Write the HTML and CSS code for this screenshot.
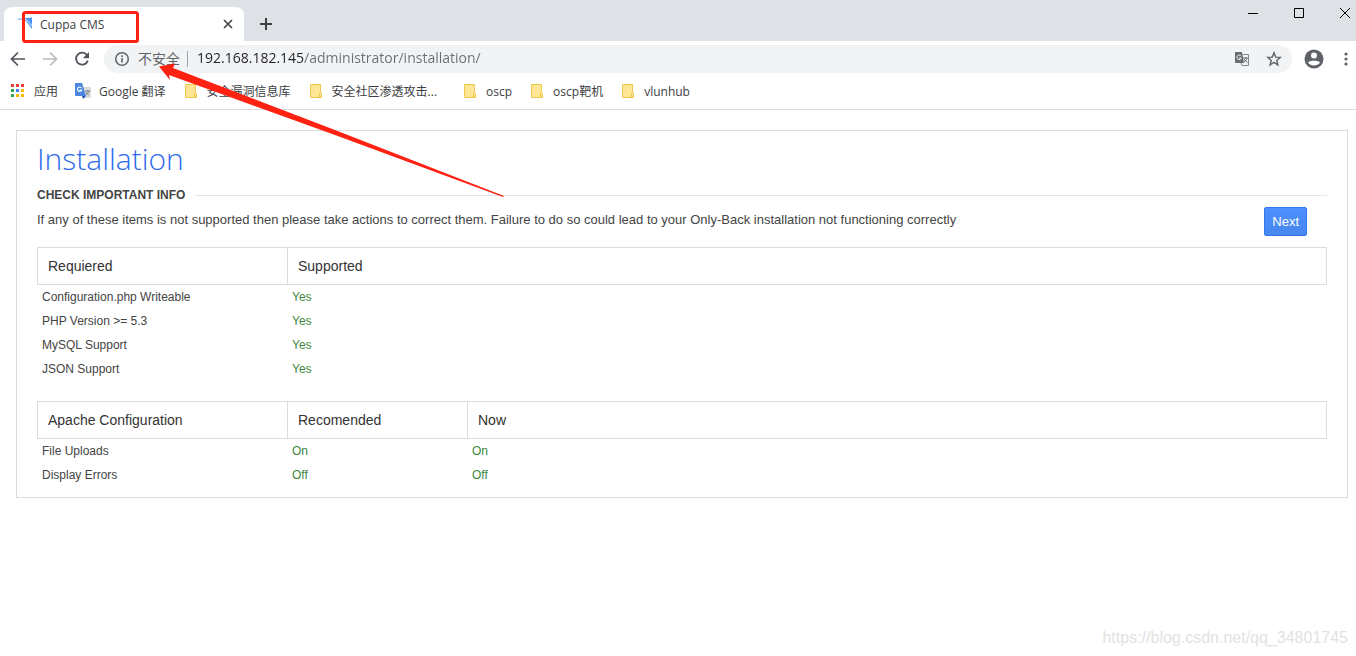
FILE: index.html
```html
<!DOCTYPE html>
<html lang="zh-CN">
<head>
<meta charset="utf-8">
<title>Cuppa CMS</title>
<link rel="stylesheet" href="styles.css">
</head>
<body>
<header class="browser">
  <div class="tabstrip">
    <div class="tab">
      <svg class="favicon" width="16" height="16" viewBox="0 0 16 16"><path d="M0 3 16 1.500V13L10 5z" fill="#4c93f5"/><path d="M4 3.500C8 4 11 7 13.500 13M8 2.500C11 4 13 6 16 10" fill="none" stroke="#fff" stroke-width=".9"/></svg>
      <span class="tab-title">Cuppa CMS</span>
      <button class="icon-btn tab-close" aria-label="Close tab"><svg width="16" height="16" viewBox="0 0 16 16"><path d="m4 4 8 8M12 4l-8 8" stroke="#3c4043" stroke-width="1.6"/></svg></button>
    </div>
    <button class="icon-btn new-tab" aria-label="New tab"><svg width="16" height="16" viewBox="0 0 16 16"><path d="M8 2v12M2 8h12" stroke="#3c4043" stroke-width="2"/></svg></button>
    <div class="window-controls">
      <button class="icon-btn" aria-label="Minimize"><svg width="12" height="12" viewBox="0 0 12 12"><path d="M1 6.5h10" stroke="#000"/></svg></button>
      <button class="icon-btn" aria-label="Maximize"><svg width="12" height="12" viewBox="0 0 12 12"><path d="M1.500 1.500h9v9h-9z" fill="none" stroke="#000"/></svg></button>
      <button class="icon-btn" aria-label="Close"><svg width="12" height="12" viewBox="0 0 12 12"><path d="m1 1 10 10M11 1 1 11" stroke="#000"/></svg></button>
    </div>
  </div>
  <div class="toolbar">
    <button class="icon-btn" aria-label="Back"><svg width="16" height="16" viewBox="0 0 16 16"><path d="M15 8H2M8 1.500 1.500 8 8 14.500" fill="none" stroke="#50545a" stroke-width="1.700"/></svg></button>
    <button class="icon-btn" aria-label="Forward"><svg width="16" height="16" viewBox="0 0 16 16"><path d="M1 8h13M8 1.500 14.500 8 8 14.500" fill="none" stroke="#b9bbbe" stroke-width="1.700"/></svg></button>
    <button class="icon-btn" aria-label="Reload"><svg width="16" height="16" viewBox="0 0 16 16"><path d="M13 4.200A6 6 0 1 0 13.800 9.600" fill="none" stroke="#50545a" stroke-width="1.800"/><path d="M15 1v6.200H8.800z" fill="#50545a"/></svg></button>
    <div class="omnibox">
      <svg width="16" height="16" viewBox="0 0 16 16"><circle cx="8" cy="8" r="6.300" fill="none" stroke="#5f6368" stroke-width="1.500"/><path d="M8 7v4.500M8 4.300v1.700" stroke="#5f6368" stroke-width="1.600"/></svg>
      <label class="security" for="url">不安全</label>
      <span class="divider"></span>
      <input id="url" class="url" type="text" value="192.168.182.145/administrator/installation/">
      <button class="icon-btn" aria-label="Translate this page"><svg width="16" height="16" viewBox="0 0 16 16"><path d="M1 1h7l2 11H2a1 1 0 0 1-1-1z" fill="#6a6d71"/><path d="M9 3.500h5.500v11H8L7 12" fill="none" stroke="#85878a"/><path d="M7 5.200A2.200 2.200 0 1 0 7.200 7H5" fill="none" stroke="#fff"/><path d="M9 7h5M11.500 6v1M13 7c-.5 2-2 3.500-3.500 4.500M10 8c.7 1.500 2 2.700 3.500 3.500" fill="none" stroke="#6a6d71"/></svg></button>
      <button class="icon-btn star" aria-label="Bookmark this page"><svg width="16" height="16" viewBox="0 0 16 16"><path d="m8 1.800 1.700 4.300 4.600.3-3.500 3 1.100 4.500L8 11.400l-3.900 2.500 1.100-4.500-3.500-3 4.600-.3z" fill="none" stroke="#5f6368" stroke-width="1.400"/></svg></button>
    </div>
    <button class="icon-btn profile" aria-label="Profile"><svg width="20" height="20" viewBox="0 0 20 20"><circle cx="10" cy="10" r="9.500" fill="#5f6368"/><circle cx="10" cy="6.500" r="3" fill="#fff"/><path d="M4 13.500C5.500 11 14.500 11 16 13.500 13.500 17.500 6.500 17.500 4 13.500z" fill="#fff"/></svg></button>
    <button class="icon-btn menu" aria-label="Menu"><svg width="4" height="16" viewBox="0 0 4 16"><g fill="#5f6368"><circle cx="2" cy="3" r="1.600"/><circle cx="2" cy="8" r="1.600"/><circle cx="2" cy="13" r="1.600"/></g></svg></button>
  </div>
  <nav class="bookmarks">
    <a href="#" class="bookmark"><svg width="16" height="16" viewBox="0 0 16 16"><path d="M1 1h3v3H1zM6 1h3v3H6zM11 1h3v3h-3z" fill="#ea4335"/><path d="M1 6h3v3H1z" fill="#34a853"/><path d="M6 6h3v3H6z" fill="#4285f4"/><path d="M11 6h3v3h-3zM6 11h3v3H6zM11 11h3v3h-3z" fill="#fbbc05"/><path d="M1 11h3v3H1z" fill="#34a853"/></svg>应用</a>
    <a href="#" class="bookmark"><svg width="16" height="16" viewBox="0 0 16 16"><path d="M7 4h9v11H8z" fill="#dcdcdc"/><path d="M0 0h7l4 13H1a1 1 0 0 1-1-1z" fill="#4a86e0"/><path d="M7 13h4l-3 3z" fill="#2855ad"/><path d="M6.500 5A2.200 2.200 0 1 0 6.700 7H4.500" fill="none" stroke="#fff" stroke-width="1.100"/><path d="M10 8h5M12.500 7v1M14 8c-.5 2-2 3-3 4M11 9c.7 1.500 2 2.500 3 3" fill="none" stroke="#747c85"/></svg>Google 翻译</a>
    <a href="#" class="bookmark"><svg width="16" height="16"><use href="#folder"/></svg>安全漏洞信息库</a>
    <a href="#" class="bookmark wide"><svg width="16" height="16"><use href="#folder"/></svg>安全社区渗透攻击...</a>
    <a href="#" class="bookmark"><svg width="16" height="16"><use href="#folder"/></svg>oscp</a>
    <a href="#" class="bookmark"><svg width="16" height="16"><use href="#folder"/></svg>oscp靶机</a>
    <a href="#" class="bookmark"><svg width="16" height="16"><use href="#folder"/></svg>vlunhub</a>
  </nav>
</header>
<main class="panel">
  <h1 class="title">Installation</h1>
  <h2 class="section">Check important info</h2>
  <div class="intro">
    <p class="intro-text">If any of these items is not supported then please take actions to correct them. Failure to do so could lead to your Only-Back installation not functioning correctly</p>
    <button class="next">Next</button>
  </div>
  <table class="checks">
    <thead><tr><th class="col-name">Requiered</th><th>Supported</th></tr></thead>
    <tbody>
      <tr><td>Configuration.php Writeable</td><td class="ok">Yes</td></tr>
      <tr><td>PHP Version &gt;= 5.3</td><td class="ok">Yes</td></tr>
      <tr><td>MySQL Support</td><td class="ok">Yes</td></tr>
      <tr><td>JSON Support</td><td class="ok">Yes</td></tr>
    </tbody>
  </table>
  <table class="checks">
    <thead><tr><th class="col-name">Apache Configuration</th><th class="col-value">Recomended</th><th>Now</th></tr></thead>
    <tbody>
      <tr><td>File Uploads</td><td class="ok">On</td><td class="ok">On</td></tr>
      <tr><td>Display Errors</td><td class="ok">Off</td><td class="ok">Off</td></tr>
    </tbody>
  </table>
</main>
<footer class="watermark">https://blog.csdn.net/qq_34801745</footer>
<svg class="annotation" width="520" height="210" viewBox="0 0 520 210">
  <rect x="23.500" y="12.500" width="114" height="29" rx="2" fill="none" stroke="#ff2112" stroke-width="3"/>
  <path d="M159 66.500 175 63.500 173 68 335 130 504 196 503 197 335 135 169 75 170 80z" fill="#ff2112"/>
</svg>
<svg class="defs" width="0" height="0"><symbol id="folder" viewBox="0 0 16 16"><path d="M2.500 1.500h10v8l1 1v4h-11z" fill="#ffe694" stroke="#ecc94e"/><path d="M11.500 14v-3.500l1-1 1 1V14z" fill="#ffe694" stroke="#ecc94e"/></symbol></svg>
</body>
</html>
```
FILE: styles.css
```css
* { box-sizing: border-box; }
body {
  margin: 0;
  min-height: 100vh;
  display: flex;
  flex-direction: column;
  background: #fff;
  color: #444;
  font-family: "Liberation Sans", Arial, sans-serif;
  font-size: 12px;
}
.browser { font-family: "Open Sans", "Noto Sans CJK SC", sans-serif; color: #3c4043; }
.icon-btn {
  display: flex;
  align-items: center;
  justify-content: center;
  padding: 0;
  border: 0;
  background: none;
}
svg { flex: none; }
.tabstrip { display: flex; height: 41px; padding-left: 4px; background: #dee1e6; }
.tab {
  display: flex;
  align-items: center;
  width: 240px;
  margin-top: 7px;
  padding: 0 8px 0 12px;
  gap: 8px;
  border-radius: 8px 8px 0 0;
  background: #fff;
}
.tab-title { flex: 1; }
.new-tab { margin: 7px 0 0 14px; height: 34px; }
.window-controls { display: flex; gap: 34px; margin-left: auto; padding-right: 5px; height: 26px; }
.toolbar { display: flex; align-items: center; gap: 16px; height: 36px; padding: 0 8px 0 10px; }
.omnibox {
  flex: 1;
  display: flex;
  align-items: center;
  gap: 8px;
  height: 28px;
  margin-left: -2px;
  padding: 0 10px;
  border-radius: 14px;
  background: #f1f3f4;
  font-size: 14px;
  line-height: 20px;
}
.security { color: #5f6368; }
.divider { width: 1px; height: 16px; margin-left: -1px; background: #a0a3a6; }
.url {
  flex: 1;
  min-width: 0;
  padding: 0 0 2px 1px;
  border: 0;
  background: linear-gradient(90deg, #202124 108px, #6a6e73 108px);
  background-clip: text;
  -webkit-background-clip: text;
  color: transparent;
  font: inherit;
}
.star { margin-left: 8px; }
.profile { margin-left: -4px; }
.menu { margin-left: 4px; }
.bookmarks {
  display: flex;
  align-items: center;
  gap: 17px;
  height: 33px;
  padding: 0 0 4px 10px;
  border-bottom: 1px solid #dcdcde;
}
.bookmark { display: flex; align-items: center; gap: 8px; color: #3c4043; text-decoration: none; }
.wide { margin-right: 8px; }
.panel { margin: 20px 8px 0 16px; padding: 0 20px 10px; border: 1px solid #dcdcdc; }
.title {
  margin: 8px 0 0;
  color: #2d6bea;
  font-family: "Open Sans", sans-serif;
  font-size: 30px;
  font-weight: 300;
  line-height: 40px;
}
.section {
  display: flex;
  align-items: center;
  gap: 10px;
  margin: 8px 0 0;
  font-size: 12px;
  line-height: 16px;
  text-transform: uppercase;
}
.section::after { content: ""; flex: 1; height: 1px; background: #e5e5e5; }
.intro { display: flex; align-items: center; justify-content: space-between; margin-bottom: 11px; padding: 4px 20px 0 0; }
.intro-text { margin: 0 0 4px; font-size: 13px; }
.next {
  height: 29px;
  padding: 0 7px;
  border: 1px solid #3079ed;
  border-radius: 2px;
  background: linear-gradient(#4d90fe, #4787ed);
  color: #fff;
  font: 13px "Liberation Sans", Arial, sans-serif;
}
.checks { width: 100%; table-layout: fixed; border-spacing: 0; }
.checks + .checks { margin-top: 20px; }
.checks th {
  height: 38px;
  padding: 0 10px;
  border: 1px solid #dcdcdc;
  border-right: 0;
  color: #333;
  font-size: 14px;
  font-weight: 400;
  text-align: left;
}
.checks th:last-child { border-right: 1px solid #dcdcdc; }
.checks td { height: 24px; padding: 0 5px; }
.col-name { width: 250px; }
.col-value { width: 180px; }
.checks .ok { color: #3c873c; }
.watermark { margin-top: auto; padding: 0 8px 9px; color: #e2e2e2; font-size: 16px; text-align: right; }
.annotation { position: absolute; top: 0; left: 0; pointer-events: none; }
.defs { position: absolute; }
```
